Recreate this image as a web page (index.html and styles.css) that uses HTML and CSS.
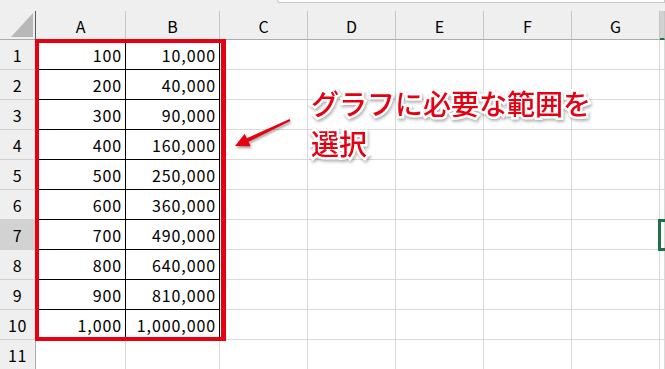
FILE: index.html
```html
<!DOCTYPE html>
<html lang="ja">
<head>
    <meta charset="utf-8">
    <meta name="viewport" content="width=device-width, initial-scale=1.0">
    <title>グラフに必要な範囲を選択</title>
    <link rel="stylesheet" href="styles.css">
</head>
<body>

    <div class="sheet">

        <div class="topbar">
            <div class="formula-edge"></div>
        </div>

        <div class="grid">
            <div class="corner">
                <svg width="22" height="24" viewBox="0 0 22 24"><polygon points="22,0 22,24 0,24" fill="#b8b8b8"/></svg>
            </div>
            <div class="col-head">A</div>
            <div class="col-head">B</div>
            <div class="col-head">C</div>
            <div class="col-head">D</div>
            <div class="col-head">E</div>
            <div class="col-head">F</div>
            <div class="col-head">G</div>
            <div class="col-head is-active"></div>

            <div class="row-head">1</div><div class="cell num in-range">100</div><div class="cell num in-range">10,000</div><div class="cell"></div><div class="cell"></div><div class="cell"></div><div class="cell"></div><div class="cell"></div><div class="cell"></div>
            <div class="row-head">2</div><div class="cell num in-range">200</div><div class="cell num in-range">40,000</div><div class="cell"></div><div class="cell"></div><div class="cell"></div><div class="cell"></div><div class="cell"></div><div class="cell"></div>
            <div class="row-head">3</div><div class="cell num in-range">300</div><div class="cell num in-range">90,000</div><div class="cell"></div><div class="cell"></div><div class="cell"></div><div class="cell"></div><div class="cell"></div><div class="cell"></div>
            <div class="row-head">4</div><div class="cell num in-range">400</div><div class="cell num in-range">160,000</div><div class="cell"></div><div class="cell"></div><div class="cell"></div><div class="cell"></div><div class="cell"></div><div class="cell"></div>
            <div class="row-head">5</div><div class="cell num in-range">500</div><div class="cell num in-range">250,000</div><div class="cell"></div><div class="cell"></div><div class="cell"></div><div class="cell"></div><div class="cell"></div><div class="cell"></div>
            <div class="row-head">6</div><div class="cell num in-range">600</div><div class="cell num in-range">360,000</div><div class="cell"></div><div class="cell"></div><div class="cell"></div><div class="cell"></div><div class="cell"></div><div class="cell"></div>
            <div class="row-head is-active">7</div><div class="cell num in-range">700</div><div class="cell num in-range">490,000</div><div class="cell"></div><div class="cell"></div><div class="cell"></div><div class="cell"></div><div class="cell"></div><div class="cell"></div>
            <div class="row-head">8</div><div class="cell num in-range">800</div><div class="cell num in-range">640,000</div><div class="cell"></div><div class="cell"></div><div class="cell"></div><div class="cell"></div><div class="cell"></div><div class="cell"></div>
            <div class="row-head">9</div><div class="cell num in-range">900</div><div class="cell num in-range">810,000</div><div class="cell"></div><div class="cell"></div><div class="cell"></div><div class="cell"></div><div class="cell"></div><div class="cell"></div>
            <div class="row-head">10</div><div class="cell num in-range">1,000</div><div class="cell num in-range">1,000,000</div><div class="cell"></div><div class="cell"></div><div class="cell"></div><div class="cell"></div><div class="cell"></div><div class="cell"></div>
            <div class="row-head">11</div><div class="cell"></div><div class="cell"></div><div class="cell"></div><div class="cell"></div><div class="cell"></div><div class="cell"></div><div class="cell"></div><div class="cell"></div>
        </div>

        <!-- 選択範囲の赤枠とアクティブセル -->
        <div class="range-box"></div>
        <div class="active-cell"></div>

        <svg class="arrow" width="70" height="45" viewBox="0 0 70 45">
            <path d="M10 36 L19.7 23.7 L21.8 28.2 L64.6 9.1 L65.4 10.9 L23.5 31.8 L25.7 36.3 Z" fill="#e60012"/>
        </svg>

        <p class="note">グラフに必要な範囲を<br>選択</p>

    </div>

</body>
</html>
```

FILE: styles.css
```css
:root {
    --grid: #dadada;
    --head-bg: #efefef;
    --red: #e60012;
    --green: #1e7145;
}

html, body {
    margin: 0;
    height: 100%;
    overflow: hidden;
    background: #fff;
}

.sheet {
    position: relative;
    width: 665px;
    height: 369px;
    font-family: "Noto Sans CJK JP", "Noto Sans", sans-serif;
    font-size: 16px;
    color: #000;
}

.topbar {
    height: 11px;
    background: var(--head-bg);
    display: flex;
}
.formula-edge {
    margin-left: 277px;
    flex: 1;
    height: 2px;
    background: #fff;
    border: solid 1px #c9c9c9;
    border-top: none;
    border-bottom-left-radius: 4px;
}

.grid {
    display: grid;
    grid-template-columns: 36px 90px 94px 88px 88px 88px 88px 88px 1fr;
    grid-template-rows: 29px repeat(11, 30px);
}

.grid > div {
    box-sizing: border-box;
}

.corner {
    background: var(--head-bg);
    border-right: solid 1px #5a5a5a;
    border-bottom: solid 1px #ababab;
    display: flex;
    align-items: flex-start;
    padding: 2px 0 0 11px;
}

.col-head {
    background: var(--head-bg);
    border-right: solid 1px #c6c6c6;
    border-bottom: solid 1px #ababab;
    display: flex;
    align-items: center;
    justify-content: center;
    line-height: 1;
    padding-top: 1px;
}
.col-head.is-active {
    background: #d2d2d2;
    border-bottom: solid 2px var(--green);
}

.row-head {
    background: var(--head-bg);
    border-right: solid 1px #ababab;
    border-bottom: solid 1px #d0d0d0;
    display: flex;
    align-items: center;
    justify-content: center;
    line-height: 1;
    letter-spacing: 0.6px;
}
.row-head.is-active {
    background: #d2d2d2;
}

.cell {
    border-right: solid 1px var(--grid);
    border-bottom: solid 1px var(--grid);
}
.cell.num {
    display: flex;
    align-items: center;
    justify-content: flex-end;
    padding-right: 3px;
    line-height: 1;
    letter-spacing: 0.9px;
}
.cell.in-range {
    border-right-color: #000;
    border-bottom-color: #000;
}

.range-box {
    position: absolute;
    left: 35px;
    top: 39px;
    width: 191px;
    height: 302px;
    box-sizing: border-box;
    border: solid var(--red);
    border-width: 4px 5px 4px 4px;
}

.active-cell {
    position: absolute;
    left: 658px;
    top: 219px;
    width: 20px;
    height: 32px;
    box-sizing: border-box;
    border: solid 3px var(--green);
}

.arrow {
    position: absolute;
    left: 225px;
    top: 110px;
    filter: drop-shadow(1px 2px 1px rgba(0, 0, 0, 0.35));
}

.note {
    position: absolute;
    left: 311px;
    top: 83px;
    margin: 0;
    font-size: 28px;
    font-weight: 500;
    line-height: 40px;
    color: var(--red);
    -webkit-text-stroke: 5px #fff;
    paint-order: stroke fill;
    filter: drop-shadow(1px 2px 1.5px rgba(0, 0, 0, 0.3));
    white-space: nowrap;
}
```
